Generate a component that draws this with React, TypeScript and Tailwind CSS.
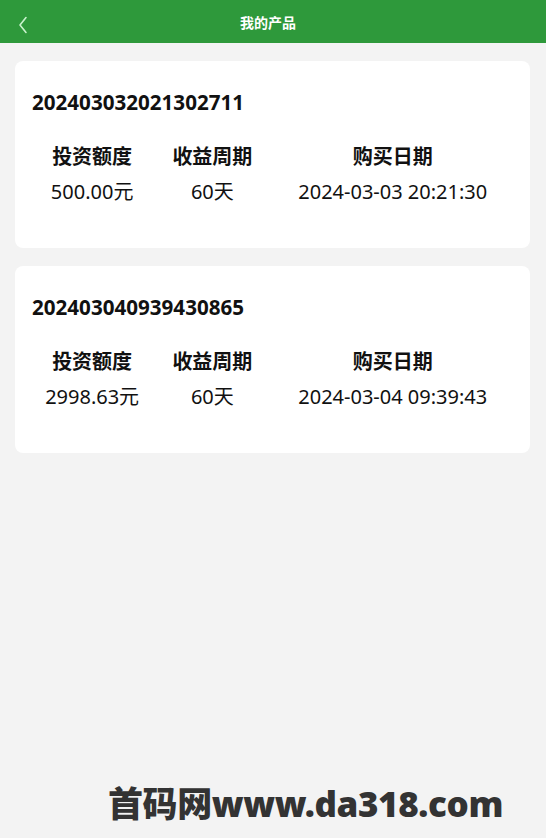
const products = [
  { no: '202403032021302711', amount: '500.00元', period: '60天', date: '2024-03-03 20:21:30' },
  { no: '202403040939430865', amount: '2998.63元', period: '60天', date: '2024-03-04 09:39:43' },
];

const ProductCard = ({ p }: { p: (typeof products)[number] }) => (
  <div className="rounded-[8px] bg-white px-[17px] pt-[27px] pb-[42px]">
    <div className="text-[20.6px] leading-[28px] font-bold text-[#111]">{p.no}</div>
    <div className="mt-[27px] flex text-center text-[20px] leading-[28px] text-[#111]">
      <div className="flex-1">
        <div className="font-bold">投资额度</div>
        <div className="mt-[7px]">{p.amount}</div>
      </div>
      <div className="flex-1">
        <div className="font-bold">收益周期</div>
        <div className="mt-[7px]">{p.period}</div>
      </div>
      <div className="flex-[2]">
        <div className="font-bold">购买日期</div>
        <div className="mt-[7px]">{p.date}</div>
      </div>
    </div>
  </div>
);

const App = () => {
  return (
    <div
      className="relative min-h-[838px] bg-[#f3f3f3]"
      style={{ fontFamily: '"Noto Sans", "Noto Sans CJK SC", sans-serif' }}
    >
      <header className="relative flex h-[43px] items-center justify-center bg-[#2e993b] pr-[10px] pt-[2px]">
        <button className="absolute left-[14px] top-[12px] p-1">
          <svg width="10" height="18" viewBox="0 0 10 18" fill="none">
            <path d="M8 1.5 L2 9 L8 16.5" stroke="#c9f2cd" strokeWidth="1.6" strokeLinecap="round" strokeLinejoin="round" />
          </svg>
        </button>
        <h1 className="text-[14px] font-bold text-white">我的产品</h1>
      </header>

      <main className="flex flex-col gap-[18px] px-[15px] pt-[18px] pr-[16px]">
        {products.map(p => (
          <ProductCard key={p.no} p={p} />
        ))}
      </main>

      <div className="absolute bottom-[14px] left-[108px] text-[35px] leading-[40px] font-black tracking-[-0.4px] text-[#333]">
        首码网www.da318.com
      </div>
    </div>
  );
};

export default App;
